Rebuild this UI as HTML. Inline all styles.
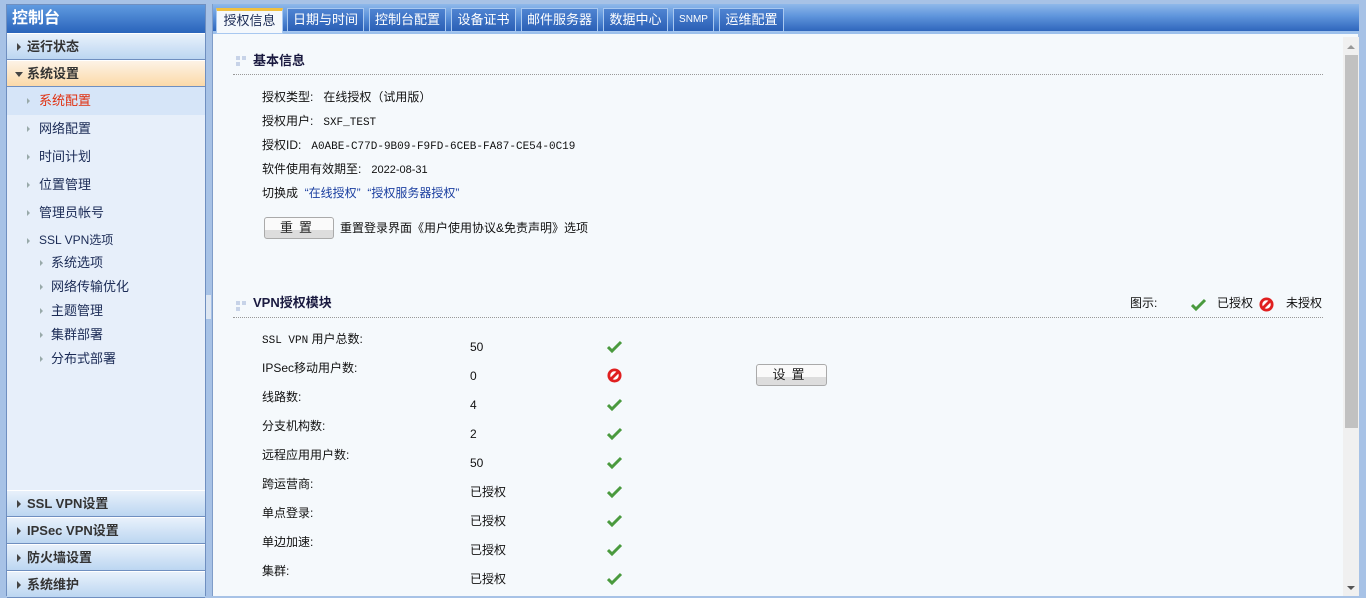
<!DOCTYPE html>
<html><head><meta charset="utf-8"><style>
*{margin:0;padding:0;box-sizing:border-box}
body{width:1366px;height:596px;overflow:hidden;background:#a7c2e6;font:12px/14px "Liberation Sans","Noto Sans CJK SC",sans-serif;color:#000;position:relative}
.a{position:absolute}
#side{left:6px;top:4px;width:200px;height:592px;background:#e7effa;border:1px solid #6f8fc0;border-bottom:none}
#hd{left:0;top:0;width:198px;height:28px;background:linear-gradient(#5f9ae0,#2a64bb);color:#fff;font-size:16px;line-height:18px;font-weight:bold;padding:5px 0 0 5px}
.g{left:0;width:198px;height:27px;background:linear-gradient(#e8f1fb,#bcd6f1);border-top:1px solid #fff;border-bottom:1px solid #6f8fc0;font-size:13px;line-height:15px;font-weight:bold;color:#333;padding:5px 0 0 20px}
.g:before{content:"";position:absolute;left:10px;top:9px;border-left:4px solid #444;border-top:4px solid transparent;border-bottom:4px solid transparent}
.g.o{background:linear-gradient(#fdf3e6,#fbd9a8)}
.g.o:before{left:8px;top:11px;border-top:5px solid #444;border-left:4px solid transparent;border-right:4px solid transparent;border-bottom:0}
.s{left:0;width:198px;height:28px;padding:6px 0 0 32px;font-size:13px;line-height:15px;color:#1a2a55}
.s:before{content:"";position:absolute;left:20px;top:11px;border-left:3px solid #9aa;border-top:3px solid transparent;border-bottom:3px solid transparent}
.ss{padding-left:44px;height:24px;padding-top:4px}
.ss:before{left:33px;top:9px}
#main{left:212px;top:4px;width:1146px;height:592px;background:#f5f9fc;border-left:1px solid #7f9dc9}
#tabs{left:0;top:0;width:1146px;height:30px;background:linear-gradient(#8fb8ea 0,#5f95dc 12px,#2f66bc);border-bottom:3px solid #9cc0ec}
.t{top:4px;height:24px;border:1px solid #a8c8f0;background:linear-gradient(#4f84d2,#2a5fb5);color:#fff;font-size:13px;line-height:22px;text-align:center}
.t.on{background:#f4f8fc;color:#1a2a55;border-top:3px solid #f0c040;line-height:20px;height:26px}
.sec{font-weight:bold;font-size:13px;color:#1a1a40}
.dot{width:10px;height:10px}
.dot i{position:absolute;width:4px;height:4px;background:#c7d3e8}
.line{height:0;border-top:1px dotted #999}
.lb{font-size:12px;color:#111}
.btn{height:22px;border:1px solid #aaa;border-radius:3px;background:linear-gradient(#fafafa 60%,#ddd 60%);font-size:13px;line-height:19px;text-align:center;color:#222;letter-spacing:6px}
#sb{left:1130px;top:33px;width:16px;height:559px;background:#f0f0f0}
a{color:#1b3fa0;text-decoration:none}
</style></head><body>
<div id="side" class="a">
<div id="hd" class="a">控制台</div>
<div class="a g" style="top:28px">运行状态</div>
<div class="a g o" style="top:55px">系统设置</div>
<div class="a s" style="top:82px;background:#d6e5f8;color:#e03010">系统配置</div>
<div class="a s" style="top:110px">网络配置</div>
<div class="a s" style="top:138px">时间计划</div>
<div class="a s" style="top:166px">位置管理</div>
<div class="a s" style="top:194px">管理员帐号</div>
<div class="a s" style="top:222px;font-size:12px">SSL VPN选项</div>
<div class="a s ss" style="top:246px">系统选项</div>
<div class="a s ss" style="top:270px">网络传输优化</div>
<div class="a s ss" style="top:294px">主题管理</div>
<div class="a s ss" style="top:318px">集群部署</div>
<div class="a s ss" style="top:342px">分布式部署</div>
<div class="a g" style="top:485px">SSL VPN设置</div>
<div class="a g" style="top:512px">IPSec VPN设置</div>
<div class="a g" style="top:539px">防火墙设置</div>
<div class="a g" style="top:566px">系统维护</div>
</div>
<div class="a" style="left:206px;top:295px;width:5px;height:24px;background:#dde6f2"></div>
<div id="main" class="a">
<div id="tabs" class="a">
<div class="a t on" style="left:3px;width:67px">授权信息</div>
<div class="a t" style="left:74px;width:77px">日期与时间</div>
<div class="a t" style="left:156px;width:77px">控制台配置</div>
<div class="a t" style="left:238px;width:65px">设备证书</div>
<div class="a t" style="left:308px;width:77px">邮件服务器</div>
<div class="a t" style="left:390px;width:65px">数据中心</div>
<div class="a t" style="left:460px;width:41px;font-size:10px">SNMP</div>
<div class="a t" style="left:506px;width:65px">运维配置</div>
</div>
<div class="a dot" style="left:23px;top:52px"><i style="left:0;top:0"></i><i style="left:6px;top:0"></i><i style="left:0;top:6px"></i></div>
<div class="a sec" style="left:40px;top:50px">基本信息</div>
<div class="a line" style="left:20px;top:70px;width:1090px"></div>
<div class="a lb" style="left:49px;top:86px">授权类型:&nbsp;&nbsp;&nbsp;在线授权（试用版）</div>
<div class="a lb" style="left:49px;top:110px">授权用户:&nbsp;&nbsp;&nbsp;<span style="font-family:'Liberation Mono';font-size:11px">SXF_TEST</span></div>
<div class="a lb" style="left:49px;top:134px">授权ID:&nbsp;&nbsp;&nbsp;<span style="font-family:'Liberation Mono';font-size:11px">A0ABE-C77D-9B09-F9FD-6CEB-FA87-CE54-0C19</span></div>
<div class="a lb" style="left:49px;top:158px">软件使用有效期至:&nbsp;&nbsp;&nbsp;<span style="font-size:11px">2022-08-31</span></div>
<div class="a lb" style="left:49px;top:182px">切换成&nbsp; <a>“在线授权”</a>&nbsp; <a>“授权服务器授权”</a></div>
<div class="a btn" style="left:51px;top:213px;width:70px">重置</div>
<div class="a lb" style="left:127px;top:217px">重置登录界面《用户使用协议&amp;免责声明》选项</div>
<div class="a dot" style="left:23px;top:297px"><i style="left:0;top:0"></i><i style="left:6px;top:0"></i><i style="left:0;top:6px"></i></div>
<div class="a sec" style="left:40px;top:292px">VPN授权模块</div>
<div class="a lb" style="left:917px;top:292px">图示:</div>
<svg class="a" style="left:978px;top:294px" width="16" height="14" viewBox="0 0 16 14"><path d="M1 7l4 4 9-9" stroke="#4a9a3e" stroke-width="3" fill="none"/></svg>
<div class="a lb" style="left:1004px;top:292px">已授权</div>
<svg class="a" style="left:1046px;top:293px" width="15" height="15" viewBox="0 0 16 16"><circle cx="8" cy="8" r="6" fill="#fff" stroke="#e02020" stroke-width="3"/><path d="M4 12L12 4" stroke="#e02020" stroke-width="3"/></svg>
<div class="a lb" style="left:1073px;top:292px">未授权</div>
<div class="a line" style="left:20px;top:313px;width:1090px"></div>
<div class="a btn" style="left:543px;top:360px;width:71px">设置</div>
<div id="rows"></div>
<div id="sb" class="a"><div class="a" style="left:4px;top:8px;border-bottom:4px solid #999;border-left:4px solid transparent;border-right:4px solid transparent"></div>
<div class="a" style="left:2px;top:18px;width:13px;height:373px;background:#c1c1c1"></div>
<div class="a" style="left:4px;top:549px;border-top:4px solid #555;border-left:4px solid transparent;border-right:4px solid transparent"></div></div>
</div>
<script>
var r=[["<span style='font-family:Liberation Mono;font-size:11px'>SSL VPN</span> 用户总数:","50",1],["IPSec移动用户数:","0",0],["线路数:","4",1],["分支机构数:","2",1],["远程应用用户数:","50",1],["跨运营商:","已授权",1],["单点登录:","已授权",1],["单边加速:","已授权",1],["集群:","已授权",1]];
var h="";r.forEach(function(x,i){var y=328+i*29;
h+='<div class="a lb" style="left:49px;top:'+y+'px">'+x[0]+'</div><div class="a lb" style="left:257px;top:'+(y+8)+'px">'+x[1]+'</div>';
h+=x[2]?'<svg class="a" style="left:394px;top:'+(y+8)+'px" width="16" height="14" viewBox="0 0 16 14"><path d="M1 7l4 4 9-9" stroke="#4a9a3e" stroke-width="3" fill="none"/></svg>':'<svg class="a" style="left:394px;top:'+(y+7)+'px" width="15" height="15" viewBox="0 0 16 16"><circle cx="8" cy="8" r="6" fill="#fff" stroke="#e02020" stroke-width="3"/><path d="M4 12L12 4" stroke="#e02020" stroke-width="3"/></svg>';});
document.getElementById("rows").outerHTML=h;
</script>
</body></html>
